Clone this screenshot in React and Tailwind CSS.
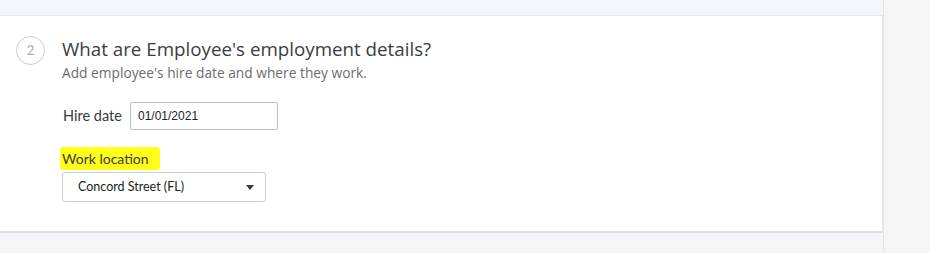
export default function App() {
  const font = { fontFamily: "Lato, 'Open Sans', Arial, sans-serif" };
  const open = { fontFamily: "'Open Sans', Lato, Arial, sans-serif" };
  return (
    <div className="flex w-[930px] h-[253px] overflow-hidden" style={font}>
      <div className="w-[883px] shrink-0 bg-[#f4f5f8] pt-[15px]">
        <div className="bg-white border-t border-[#e3e5ea] border-b-2 border-b-[#dcdee3] border-r border-r-[#e3e5e8] h-[218px] flex pl-[16px] pt-[20px]">
          <div className="w-[29px] h-[29px] rounded-full border border-[#c9cbcf] flex items-center justify-center text-[13px] text-[#a9abaf] shrink-0">
            2
          </div>
          <div className="ml-[17px] flex flex-col">
            <div className="text-[18.75px] leading-[24px] text-[#3b3c40] mt-[1px]" style={open}>
              What are Employee's employment details?
            </div>
            <div className="text-[13.75px] leading-[18px] text-[#6b6c72] mt-[3px]" style={open}>
              Add employee's hire date and where they work.
            </div>
            <div className="flex items-center mt-[20px]">
              <span className="text-[14.5px] text-[#393a3d] ml-[1px] w-[67px]">Hire date</span>
              <div className="w-[148px] h-[28px] border border-[#babec5] rounded-[2px] flex items-center pl-[7px] text-[12px] text-[#222]" style={{ fontFamily: "Arial, 'Liberation Sans', sans-serif" }}>
                01/01/2021
              </div>
            </div>
            <div className="mt-[17px] flex">
              <span className="bg-[#ffff1a] text-[14px] leading-[23px] text-[#393a3d] pl-[2px] pr-[11px] -ml-[2px] rounded-[3px]">
                Work location
              </span>
            </div>
            <div className="mt-[2px] w-[204px] h-[30px] border border-[#c9ccd1] rounded-[3px] flex items-center justify-between pl-[15px] pr-[11px] text-[12.5px] text-[#222]">
              <span>Concord Street (FL)</span>
              <svg width="8" height="5" viewBox="0 0 8 5"><path d="M0 0h8L4 5z" fill="#393a3d" /></svg>
            </div>
          </div>
        </div>
      </div>
      <div className="flex-1 bg-[#f5f5f5] border-l border-[#e4e4e4]"></div>
    </div>
  );
}
